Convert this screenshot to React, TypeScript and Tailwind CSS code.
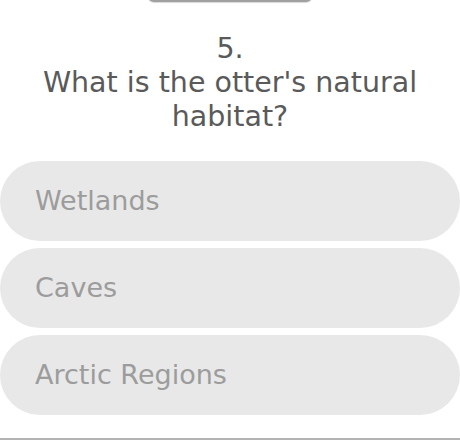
const options = ["Wetlands", "Caves", "Arctic Regions"];

export default function App() {
  return (
    <div
      className="relative h-[440px] w-[460px] overflow-hidden bg-white"
      style={{ fontFamily: "'DejaVu Sans', 'Open Sans', sans-serif" }}
    >
      {/* bottom edge of the previous card */}
      <div className="absolute left-[148px] top-[-6px] h-[8px] w-[164px] rounded-b-md bg-[#a0a0a0] shadow-[0_1px_1px_rgba(0,0,0,0.15)]" />

      <div className="pt-[32px] text-center text-[28.5px] leading-[34px] text-[#5a5a5a]">
        <div>5.</div>
        <div className="px-5">What is the otter's natural habitat?</div>
      </div>

      <div className="mt-[27px] flex flex-col gap-[7px]">
        {options.map((opt) => (
          <button
            key={opt}
            className="flex h-[80px] w-full items-center rounded-full bg-[#e8e8e8] pl-[35px] text-left text-[27px] text-[#9c9c9c]"
          >
            {opt}
          </button>
        ))}
      </div>

      <div className="absolute bottom-0 left-0 h-[2px] w-full bg-[#b3b3b3]" />
    </div>
  );
}
